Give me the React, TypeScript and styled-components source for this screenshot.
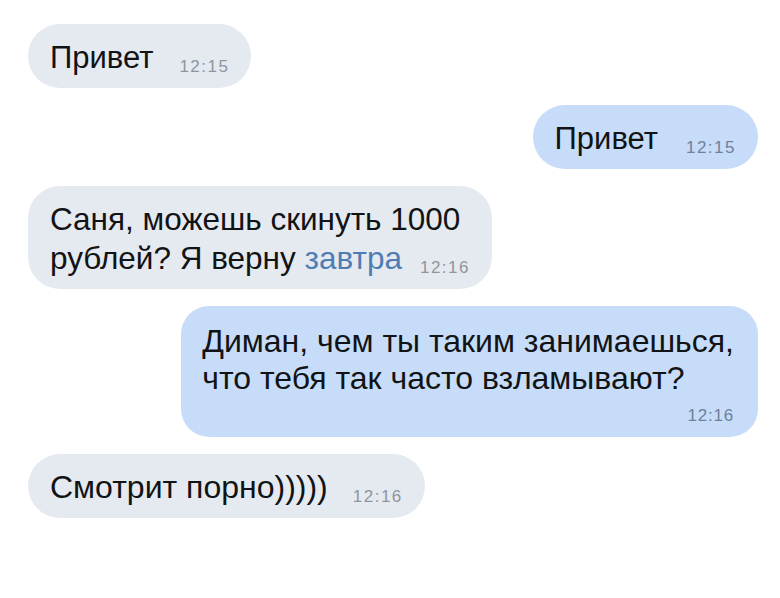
import React from 'react';
import styled, { createGlobalStyle } from 'styled-components';

const Global = createGlobalStyle`
  html, body { margin: 0; padding: 0; background: #ffffff; }
  body { font-family: "Liberation Sans", Arial, sans-serif; }
`;

const Chat = styled.div`
  width: 780px;
  height: 598px;
  box-sizing: border-box;
  padding: 24px 22px 0 28px;
  display: flex;
  flex-direction: column;
  gap: 17px;
  background: #ffffff;
`;

const Bubble = styled.div<{ $out?: boolean; $size?: number }>`
  align-self: ${p => (p.$out ? 'flex-end' : 'flex-start')};
  background: ${p => (p.$out ? '#c6dcf9' : '#e5eaf1')};
  border-radius: 32px;
  padding: 14px 22px 11px 22px;
  font-size: ${p => p.$size ?? 31}px;
  line-height: 39px;
  color: #121314;
  white-space: nowrap;
`;

const BigBubble = styled(Bubble)`
  border-radius: 28px;
  padding: 17px 24px 10px 21px;
  font-size: 32px;
  line-height: 37px;
`;

const Time = styled.span<{ $out?: boolean; $gap?: number }>`
  display: inline-block;
  margin-left: ${p => p.$gap ?? 25}px;
  font-size: 17px;
  line-height: 17px;
  letter-spacing: 1.5px;
  vertical-align: -4px;
  color: ${p => (p.$out ? '#6f819a' : '#8f959e')};
`;

const TimeRow = styled.div`
  margin-top: 8px;
  text-align: right;
  font-size: 17px;
  line-height: 22px;
  letter-spacing: 0.8px;
  color: #6f819a;
`;

const Link = styled.span`
  color: #4f7db3;
`;

export default function App() {
  return (
    <>
      <Global />
      <Chat>
        <Bubble>
          Привет<Time $gap={26}>12:15</Time>
        </Bubble>
        <Bubble $out>
          Привет<Time $out $gap={28}>12:15</Time>
        </Bubble>
        <Bubble $size={31.5}>
          Саня, можешь скинуть 1000
          <br />
          рублей? Я верну <Link>завтра</Link>
          <Time $gap={18}>12:16</Time>
        </Bubble>
        <BigBubble $out>
          Диман, чем ты таким занимаешься,
          <br />
          что тебя так часто взламывают?
          <TimeRow>12:16</TimeRow>
        </BigBubble>
        <Bubble $size={32}>
          Смотрит порно)))))<Time $gap={25}>12:16</Time>
        </Bubble>
      </Chat>
    </>
  );
}
